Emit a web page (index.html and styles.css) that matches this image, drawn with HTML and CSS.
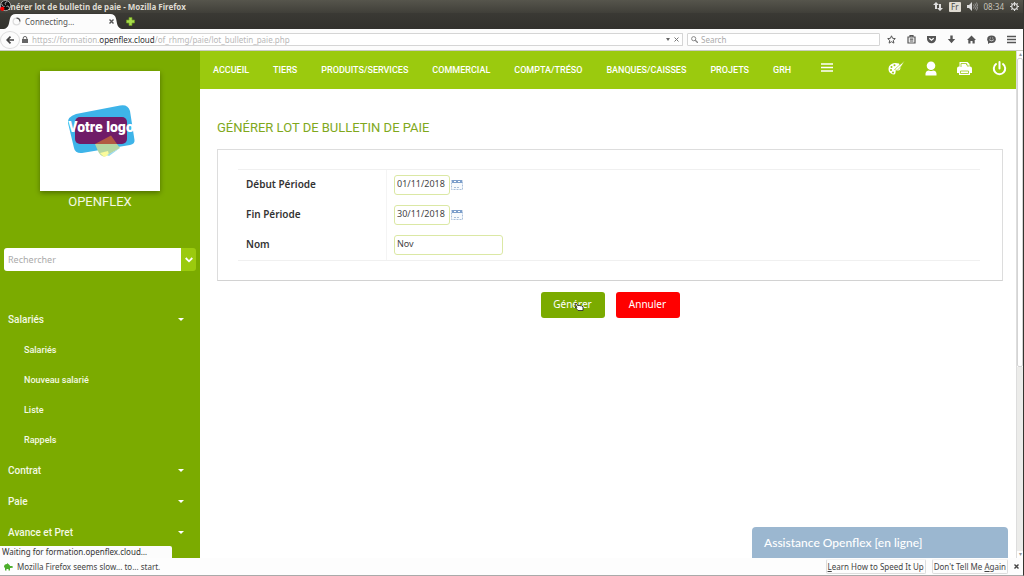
FILE: index.html
```html
<!DOCTYPE html>
<html lang="fr">
<head>
<meta charset="utf-8">
<title>Générer lot de bulletin de paie</title>
<link rel="stylesheet" href="styles.css">
</head>
<body>
<div class="window">
  <header class="titlebar">
    <svg class="recorder" viewBox="0 0 13 13" aria-hidden="true"><circle cx="6" cy="6" r="5.5" fill="#111" stroke="#ccc" stroke-width=".8"/><path d="M6 5C5 3 6 2 8 2M7 7c2-1 3 0 3 2M5 7C3 7 2 6 2 4" fill="none" stroke="#bbb"/><circle cx="2.5" cy="9.500" r="2.300" fill="#f00"/></svg>
    <span class="window-title">Générer lot de bulletin de paie - Mozilla Firefox</span>
    <div class="tray">
      <svg width="10" height="9" viewBox="0 0 10 9" fill="#ddd" aria-hidden="true"><path d="M3 0l3 3H4v4H2V3H0zM7 9L4 6h2V2h2v4h2z"/></svg>
      <span class="lang">Fr</span>
      <svg width="11" height="9" viewBox="0 0 11 9" fill="#ddd" aria-hidden="true"><path d="M0 3h2l3-3v9L2 6H0z"/><path d="M6.500 2.500q1.500 2 0 4M8 1.500q2.500 3 0 6M9.500.5q3 4 0 8" fill="none" stroke="#aaa" stroke-width=".8"/></svg>
      <span class="clock">08:34</span>
      <svg width="9" height="9" viewBox="0 0 9 9" aria-hidden="true"><circle cx="4.500" cy="4.500" r="2.800" fill="none" stroke="#ddd" stroke-width="1.200"/><path d="M4.500 0v4M0 4.500h1.500M7.500 4.500H9M1.300 1.300l1 1M7.700 1.300l-1 1M1.300 7.700l1-1M7.700 7.700l-1-1M4.500 7.500V9" stroke="#ddd" stroke-width="1.100"/></svg>
    </div>
  </header>

  <div class="tabs">
    <div class="tab">
      <svg class="tab-shape" viewBox="0 0 120 15" preserveAspectRatio="none" aria-hidden="true"><path d="M0 15C5 14 5 9 6 5Q7 0 12 0H108Q113 0 114 5C115 9 115 14 120 15Z" fill="#fcfcfc"/></svg>
      <svg class="spinner" width="9" height="9" viewBox="0 0 9 9" fill="none" aria-hidden="true"><circle cx="4.500" cy="4.500" r="3.400" stroke="#ddd" stroke-width="1.200"/><path d="M4.500 1.100A3.400 3.400 0 0 1 7.900 4.500" stroke="#555" stroke-width="1.200"/></svg>
      <span class="tab-label">Connecting…</span>
      <button class="plain" aria-label="Fermer l'onglet"><svg width="5" height="5" viewBox="0 0 5 5"><path d="M.5.5l4 4M4.500.5l-4 4" stroke="#555" stroke-width="1.400"/></svg></button>
    </div>
    <button class="plain" aria-label="Nouvel onglet"><svg width="9" height="9" viewBox="0 0 9 9"><path d="M3 .5h3V3h2.500v3H6v2.500H3V6H.5V3H3z" fill="#a8dc4a" stroke="#6d9c20" stroke-width=".7"/></svg></button>
  </div>

  <div class="toolbar">
    <button class="plain back" aria-label="Retour"><svg width="8" height="8" viewBox="0 0 8 8"><path d="M8 4H1.500M4.500.7L1.200 4l3.300 3.300" fill="none" stroke="#444" stroke-width="1.700"/></svg></button>
    <div class="address">
      <svg width="6" height="7" viewBox="0 0 6 7" aria-hidden="true"><path d="M0 3h6v4H0z" fill="#666"/><path d="M1.200 3.200V2a1.800 1.500 0 0 1 3.600 0v1.200" fill="none" stroke="#666"/></svg>
      <a class="url" href="#">https://formation.<b>openflex.cloud</b>/of_rhmg/paie/lot_bulletin_paie.php</a>
      <svg width="4" height="3" viewBox="0 0 4 3" aria-hidden="true"><path d="M0 0h4L2 3z" fill="#666"/></svg>
      <button class="plain" aria-label="Arrêter"><svg width="5" height="5" viewBox="0 0 5 5"><path d="M.5.5l4 4M4.500.5l-4 4" stroke="#777"/></svg></button>
    </div>
    <label class="websearch">
      <svg width="7" height="7" viewBox="0 0 7 7" fill="none" stroke="#888" aria-hidden="true"><circle cx="2.700" cy="2.700" r="2.100"/><path d="M4.300 4.300L7 7" stroke-width="1.300"/></svg>
      <input type="text" placeholder="Search" aria-label="Search">
    </label>
    <div class="tools">
      <button class="plain" aria-label="Marque-page"><svg width="9" height="9" viewBox="0 0 9 9"><path d="M4.500.8l1.100 2.500 2.700.3-2 1.800.6 2.700-2.400-1.400-2.400 1.400.6-2.700-2-1.800 2.700-.3z" fill="none" stroke="#555"/></svg></button>
      <button class="plain" aria-label="Bibliothèque"><svg width="9" height="9" viewBox="0 0 9 9"><path d="M1 2h7v6H1zM3 2V.7h3V2M2.800 4.200h3.500M2.800 6h3.500" fill="none" stroke="#555" stroke-width="1.200"/></svg></button>
      <button class="plain" aria-label="Pocket"><svg width="9" height="9" viewBox="0 0 9 9"><path d="M0 1h9v3a4.500 4.200 0 0 1-9 0z" fill="#555"/><path d="M2.300 3.200l2.200 2 2.200-2" fill="none" stroke="#fff" stroke-width="1.200"/></svg></button>
      <button class="plain" aria-label="Téléchargements"><svg width="9" height="9" viewBox="0 0 9 9"><path d="M3.300.5h2.400v3.500h2.500L4.500 8.200.8 4h2.500z" fill="#555"/></svg></button>
      <button class="plain" aria-label="Accueil"><svg width="9" height="9" viewBox="0 0 9 9"><path d="M4.500.5L9 5H7.700v3.500H5.500v-2.500h-2v2.500H1.300V5H0z" fill="#555"/></svg></button>
      <button class="plain" aria-label="Messages"><svg width="9" height="9" viewBox="0 0 9 9"><ellipse cx="4.500" cy="4.200" rx="4.300" ry="3.700" fill="#555"/><path d="M1 6v3l3-2z" fill="#555"/><path d="M2.200 4.800q2.300 2 4.600 0M2.800 3h1M5.200 3h1" fill="none" stroke="#eee" stroke-width=".8"/></svg></button>
      <button class="plain" aria-label="Menu"><svg width="9" height="9" viewBox="0 0 9 9"><path d="M0 1.500h9M0 4.500h9M0 7.500h9" stroke="#555" stroke-width="1.600"/></svg></button>
    </div>
  </div>

  <div class="viewport">
    <aside class="sidebar">
      <div class="logo">
        <svg viewBox="0 0 120 120" role="img" aria-label="Votre logo">
          <path d="M36 43L80 34.500Q88 33 90 40L94.500 69Q95 73 90 74L42 82Q35 82.500 34 77L28 52Q27 46 36 43Z" fill="#3eb4e9"/>
          <rect x="35" y="46" width="52" height="27" rx="5" fill="#701c68"/>
          <path d="M55 73L71 64.500L77 73Z" fill="#b25a42"/>
          <path d="M55 73H77L80 77L66 85Q61 87 58 80Z" fill="#b5d6a2"/>
          <path d="M60 82l8-2 1 4-5 2z" fill="#fbfb9c"/><path d="M67 84l13-7-11 8z" fill="#98d9ef"/>
          <text class="logo-text" x="61" y="61" text-anchor="middle">Votre logo</text>
        </svg>
      </div>
      <p class="company">OPENFLEX</p>
      <form class="finder">
        <input type="text" placeholder="Rechercher" aria-label="Rechercher">
        <button type="button" aria-label="Options de recherche"><svg width="8" height="6" viewBox="0 0 8 6"><path d="M.7 1L4 4.300 7.300 1" fill="none" stroke="#fff" stroke-width="1.800"/></svg></button>
      </form>
      <nav class="menu" aria-label="Salariés">
        <a class="group" href="#">Salariés</a>
        <a class="sub" href="#">Salariés</a>
        <a class="sub" href="#">Nouveau salarié</a>
        <a class="sub" href="#">Liste</a>
        <a class="sub" href="#">Rappels</a>
        <a class="group" href="#">Contrat</a>
        <a class="group" href="#">Paie</a>
        <a class="group" href="#">Avance et Pret</a>
      </nav>
    </aside>

    <div class="page">
      <header class="navbar">
        <nav class="links" aria-label="Modules">
          <a href="#">ACCUEIL</a><a href="#">TIERS</a><a href="#">PRODUITS/SERVICES</a><a href="#">COMMERCIAL</a><a href="#">COMPTA/TRÉSO</a><a href="#">BANQUES/CAISSES</a><a href="#">PROJETS</a><a href="#">GRH</a>
          <button class="plain more" aria-label="Plus"><svg width="12" height="10" viewBox="0 0 12 10"><path d="M0 1h12M0 4.500h12M0 8h12" stroke="#fff" stroke-width="1.400"/></svg></button>
        </nav>
        <div class="actions">
          <button class="plain" aria-label="Thème"><svg width="17" height="15" viewBox="0 0 17 15"><path d="M11 2.500Q4 .5 1 5.500q-2 6 4 8 3 0 2.500-2.500 0-2 2-1.500 3 .5 3-3z" fill="#fff"/><path d="M6.500 8.500L11 4.500 16.500 0 13.500 5 9 9.500z" fill="#fff" stroke="#9bca0e" stroke-width=".6"/><g fill="#9bca0e"><circle cx="3.500" cy="6" r="1"/><circle cx="6.500" cy="4.200" r="1"/><circle cx="3" cy="9" r="1"/><circle cx="5" cy="11.500" r="1"/></g></svg></button>
          <button class="plain" aria-label="Profil"><svg width="12" height="15" viewBox="0 0 12 15" fill="#fff"><circle cx="6" cy="4.700" r="4.300"/><path d="M.5 14.500v-2Q1 9.500 4 9.500q2 1 4 0 3 0 3.500 3v2z"/></svg></button>
          <button class="plain" aria-label="Imprimer"><svg width="15" height="15" viewBox="0 0 15 15"><path d="M2.500 6V1h8l2 2v3M0 12V7.500Q0 5.500 2 5.500h11q2 0 2 2V12h-2v2H2v-2z" fill="#fff"/><path d="M4 6V2.500h5.500V4H11v2M3.500 10h8v2.500h-8z" fill="none" stroke="#9bca0e" stroke-width=".8"/></svg></button>
          <button class="plain" aria-label="Déconnexion"><svg width="15" height="15" viewBox="0 0 15 15" fill="none" stroke="#fff" stroke-width="2" stroke-linecap="round"><path d="M7.500 1v6.500M4 3a5.700 5.700 0 1 0 7 0"/></svg></button>
        </div>
      </header>

      <main class="content">
        <h1>GÉNÉRER LOT DE BULLETIN DE PAIE</h1>
        <form class="payroll">
          <div class="panel">
            <div class="fields">
              <label for="start">Début Période</label>
              <div class="control"><input class="date" id="start" type="text" value="01/11/2018"><button type="button" class="plain" aria-label="Choisir la date de début"><svg width="12" height="12" viewBox="0 0 12 12"><path d="M.5 1.500h11v9H.5z" fill="#f7fafd" stroke="#a9bfda" stroke-dasharray="2 1"/><path d="M1 1h10v3H1z" fill="#7d9fcb"/><path d="M3 2.500h2M7 2.500h2" stroke="#fff"/><path d="M3 8.500h2M6 8.500h2" stroke="#a9bfda"/></svg></button></div>
              <label for="end">Fin Période</label>
              <div class="control"><input class="date" id="end" type="text" value="30/11/2018"><button type="button" class="plain" aria-label="Choisir la date de fin"><svg width="12" height="12" viewBox="0 0 12 12"><path d="M.5 1.500h11v9H.5z" fill="#f7fafd" stroke="#a9bfda" stroke-dasharray="2 1"/><path d="M1 1h10v3H1z" fill="#7d9fcb"/><path d="M3 2.500h2M7 2.500h2" stroke="#fff"/><path d="M3 8.500h2M6 8.500h2" stroke="#a9bfda"/></svg></button></div>
              <label for="name">Nom</label>
              <div class="control"><input class="name" id="name" type="text" value="Nov"></div>
            </div>
          </div>
          <div class="buttons">
            <button type="button" class="btn submit">Générer<svg class="pointer" width="10" height="10" viewBox="0 0 10 10" aria-hidden="true"><path d="M1 2q1-2 2 0l1 2 1-1 1 1 1-.5 1 1 1 0v4H4L1 5l2 .5z" fill="#fff" stroke="#222" stroke-width=".8"/></svg></button>
            <button type="button" class="btn cancel">Annuler</button>
          </div>
        </form>
      </main>
      <button class="chat">Assistance Openflex [en ligne]</button>
    </div>
    <div class="scrollbar" aria-hidden="true"><span class="arrow">▴</span><span class="thumb"></span><span class="track"></span><span class="arrow">▾</span></div>
    <div class="status">Waiting for formation.openflex.cloud…</div>
  </div>

  <footer class="notice">
    <svg width="9" height="8" viewBox="0 0 9 8" aria-hidden="true"><path d="M0 4Q0 1 3 1V0l2 1.500Q6 2 6 3h2q1 0 1 1.500L7 5H6v2.500H4.500V6h-2v1.500H1V5z" fill="#4cae2c"/></svg>
    <span class="message">Mozilla Firefox seems slow... to... start.</span>
    <button class="tip"><u>L</u>earn How to Speed It Up</button>
    <button class="tip">Don't Tell Me <u>A</u>gain</button>
    <button class="plain" aria-label="Fermer"><svg width="5" height="5" viewBox="0 0 5 5"><path d="M.5.5l4 4M4.500.5l-4 4" stroke="#444" stroke-width="1.400"/></svg></button>
  </footer>
</div>
</body>
</html>
```
FILE: styles.css
```css
* { box-sizing: border-box; }

body {
  margin: 0;
  font-family: "Noto Sans", "Open Sans", sans-serif;
  font-size: 8px;
  color: #444;
  background: #fff;
}

a { color: inherit; text-decoration: none; }
svg { display: block; flex: none; }
button, input { font: inherit; color: inherit; }

.plain {
  display: flex;
  flex: none;
  padding: 0;
  border: 0;
  background: none;
}

.window {
  display: flex;
  flex-direction: column;
  height: 100vh;
  border-right: 1px solid #35342f;
  border-bottom: 1px solid #aaa;
}

/* Desktop panel and browser chrome */
.titlebar {
  display: flex;
  align-items: center;
  flex: none;
  height: 13px;
  padding: 0 4px 0 0;
  background: linear-gradient(#56554c, #403f39);
  color: #dfdbd2;
  position: relative;
}
.recorder { position: absolute; left: 0; top: 0; width: 12px; height: 12px; }
.window-title { flex: 1; font-weight: 700; }
.tray { display: flex; align-items: center; gap: 6px; }
.lang { padding: 0 2px; background: #dfdbd2; color: #444; line-height: 10px; border-radius: 1px; }
.clock { color: #c8c4bb; }

.tabs {
  display: flex;
  align-items: center;
  flex: none;
  gap: 4px;
  height: 16px;
  padding: 1px 0 0 4px;
  background: linear-gradient(#3a3934, #32312d);
}
.tab {
  position: relative;
  display: flex;
  align-items: center;
  gap: 4px;
  width: 118px;
  height: 15px;
  padding: 0 8px;
  color: #555;
}
.tab-shape { position: absolute; inset: 0; width: 100%; height: 100%; }
.spinner, .tab-label, .tab .plain { position: relative; }
.tab-label { flex: 1; }

.toolbar {
  display: flex;
  align-items: center;
  flex: none;
  height: 22px;
  padding-right: 7px;
  background: #fcfcfc;
  border-bottom: 1px solid #c9ccc0;
}
.back {
  width: 20px;
  height: 18px;
  align-items: center;
  justify-content: center;
  border: 1px solid #ddd;
  border-radius: 50%;
}
.address, .websearch {
  display: flex;
  align-items: center;
  height: 13px;
  border: 1px solid #d5d5d5;
  background: #fff;
  border-radius: 1px;
}
.address { flex: 1; gap: 4px; padding: 0 3px 0 2px; border-left: 0; margin-right: 4px; }
.url { flex: 1; color: #b8b8b8; }
.url b { font-weight: 400; color: #333; }
.websearch { width: 193px; gap: 3px; padding: 0 3px; }
.websearch input { width: 100%; min-width: 0; padding: 0; border: 0; background: none; outline: 0; }
.websearch input::placeholder { color: #aaa; }
.tools { display: flex; justify-content: space-between; width: 129px; margin-left: 7px; }

/* Page area */
.viewport { position: relative; display: flex; flex: 1; min-height: 0; }

.sidebar {
  display: flex;
  flex-direction: column;
  flex: none;
  width: 200px;
  overflow: hidden;
  background: #7bab00;
  color: #f4f9e4;
  font-family: Roboto, sans-serif;
}
.logo {
  width: 120px;
  margin: 20px auto 0;
  background: #fff;
  box-shadow: 0 2px 5px rgba(0, 0, 0, .35);
}
.logo-text { font: 900 14px Roboto, sans-serif; fill: #fff; }
.company { margin: 2px 0 0; font-size: 13px; line-height: 18px; text-align: center; }

.finder { display: flex; height: 23px; margin: 37px 4px 0; }
.finder input {
  flex: 1;
  min-width: 0;
  padding: 0 4px;
  border: 0;
  border-radius: 3px 0 0 3px;
  background: #fff;
  font: 9px "Noto Sans", sans-serif;
  color: #555;
}
.finder input::placeholder { color: #aaa; }
.finder button {
  display: grid;
  place-items: center;
  width: 15px;
  padding: 0;
  border: 0;
  border-radius: 0 3px 3px 0;
  background: #9bca0e;
}

.menu { margin-top: 33px; }
.menu a { display: flex; align-items: center; }
.group { justify-content: space-between; height: 31px; padding: 0 16px 0 8px; font-size: 10px; font-weight: 500; }
.group::after {
  content: "";
  border: 3px solid transparent;
  border-top-color: #fff;
  border-bottom: 0;
}
.sub { height: 30px; padding-left: 24px; font-size: 9px; font-weight: 500; }

.page { position: relative; flex: 1; min-width: 0; background: #fff; }

.navbar {
  display: flex;
  align-items: center;
  justify-content: space-between;
  height: 38px;
  padding: 0 9px 0 13px;
  background: #9bca0e;
  color: #fff;
  font-family: Roboto, sans-serif;
  font-size: 9px;
  font-weight: 500;
}
.links { display: flex; align-items: center; gap: 24px; }
.actions { display: flex; align-items: center; gap: 20px; }
.actions, .more { padding-bottom: 4px; }
.more { margin-left: 6px; }

.content { padding: 29px 13px 0 17px; }
h1 {
  margin: 0;
  font: 400 13px/20px Roboto, sans-serif;
  color: #80a81c;
}
.panel {
  margin-top: 11px;
  padding: 19px 22px 19px 20px;
  border: 1px solid #ddd;
  border-bottom-color: #d2d2d2;
}
.fields {
  display: grid;
  grid-template-columns: 149px 1fr;
  grid-auto-rows: 30px;
  border-top: 1px solid #f0f0f0;
  border-bottom: 1px solid #f0f0f0;
}
.fields label {
  padding-left: 8px;
  border-right: 1px solid #f4f4f4;
  font-size: 10px;
  font-weight: 600;
  line-height: 28px;
  color: #333;
}
.control { display: flex; align-items: center; gap: 1px; padding: 0 0 1px 7px; }
.control input {
  height: 20px;
  padding: 0 2px 2px;
  border: 1px solid #dbe8a4;
  border-radius: 3px;
  background: #fff;
  font-size: 9px;
}
.control .date { width: 56px; padding-right: 0; }
.name { width: 109px; }

.buttons { display: flex; justify-content: center; gap: 11px; margin-top: 11px; }
.btn {
  position: relative;
  width: 64px;
  height: 26px;
  padding: 0 0 2px;
  border: 0;
  border-radius: 3px;
  color: #fff;
  font-size: 10px;
}
.submit { background: #7bab00; }
.cancel { background: #f00; }
.pointer { position: absolute; left: 33px; top: 10px; }

.chat {
  position: absolute;
  right: 8px;
  bottom: 0;
  width: 256px;
  height: 31px;
  padding: 0 12px;
  border: 0;
  border-radius: 4px 4px 0 0;
  background: #9bb7d0;
  color: #fff;
  font-family: Lato, sans-serif;
  font-size: 12px;
  font-weight: 500;
  text-align: left;
}

.scrollbar {
  display: flex;
  flex-direction: column;
  flex: none;
  width: 7px;
  background: #fff;
  border-left: 1px solid #ddd;
}
.arrow { height: 7px; line-height: 7px; font-size: 6px; text-align: center; color: #999; }
.thumb { flex: 5; border: 1px solid #d4d4d4; border-radius: 2px; background: #fff; }
.track { flex: 3; background: #ececea; }

.status {
  position: absolute;
  left: 0;
  bottom: 0;
  width: 172px;
  padding: 0 2px;
  background: #fcfcfc;
  border-radius: 0 2px 0 0;
  line-height: 12px;
  color: #333;
}

.notice {
  display: flex;
  align-items: center;
  flex: none;
  gap: 4px;
  height: 17px;
  padding: 0 4px;
  background: #fdfdfd;
}
.message { flex: 1; }
.tip {
  height: 15px;
  padding: 0 1px;
  border: 1px solid #ddd;
  border-top-color: #f4f4f4;
  border-radius: 2px;
  background: #fdfdfd;
}
.tip + .tip { margin: 0 2px; }
```
